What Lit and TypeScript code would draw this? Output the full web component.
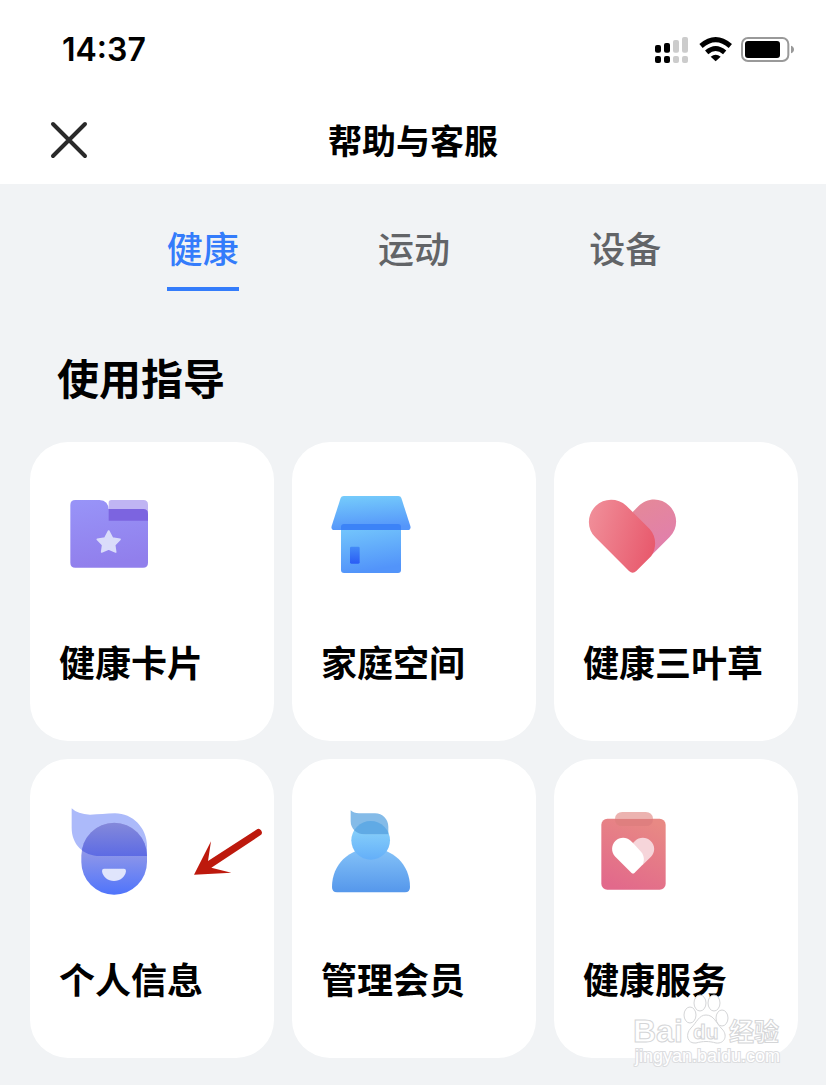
import { LitElement, html, css, svg } from "lit";
import { customElement, state } from "lit/decorators.js";

const folderIcon = html`<svg class="icon" viewBox="0 0 360 330" aria-hidden="true">
  <defs>
    <linearGradient id="folder" x1="0" y1="0" x2="0.2" y2="1">
      <stop offset="0" stop-color="#9894f8" /><stop offset="1" stop-color="#917fec" />
    </linearGradient>
  </defs>
  <path d="M176 68Q176 60 184 60H280Q294 60 294 74V110H176Z" fill="#c0b5f3" />
  <path d="M160 87H280Q294 87 294 101V140H160Z" fill="#7c64e0" />
  <path d="M76 60H148Q176 62 176 90V122H294V248Q294 263 279 263H76Q61 263 61 248V75Q61 60 76 60Z" fill="url(#folder)" />
  <path d="M176 153L187 174L210 178L194 195L197 216L176 207L155 216L158 195L142 178L165 174Z" fill="#dadcfa" stroke="#dadcfa" stroke-width="5" stroke-linejoin="round" />
</svg>`;

const houseIcon = html`<svg class="icon" viewBox="-9 0 360 330" aria-hidden="true">
  <defs>
    <linearGradient id="roof" x1="0" y1="0" x2="0.15" y2="1">
      <stop offset="0" stop-color="#76cdfb" /><stop offset="1" stop-color="#5596fa" />
    </linearGradient>
    <linearGradient id="wall" x1="0" y1="0" x2="0.2" y2="1">
      <stop offset="0" stop-color="#77cbfc" /><stop offset="1" stop-color="#5294fa" />
    </linearGradient>
    <linearGradient id="door" x1="0" y1="0" x2="0" y2="1">
      <stop offset="0" stop-color="#438bf7" /><stop offset="1" stop-color="#2a5cf5" />
    </linearGradient>
  </defs>
  <rect x="78" y="132" width="180" height="147" rx="9" fill="url(#wall)" />
  <path d="M86 48H250Q257 48 259 54L286 138Q289 150 277 150H59Q47 150 50 138L77 54Q79 48 86 48Z" fill="url(#roof)" />
  <path d="M78 150V141Q78 132 87 132H249Q258 132 258 141V150Z" fill="#3c83f7" />
  <rect x="105" y="200" width="29" height="51" rx="4" fill="url(#door)" />
</svg>`;

const heartIcon = html`<svg class="icon" viewBox="-3 0 360 330" aria-hidden="true">
  <defs>
    <linearGradient id="heart-front" x1="0" y1="0.3" x2="1" y2="0.6">
      <stop offset="0" stop-color="#f08d98" /><stop offset="1" stop-color="#e85a6d" />
    </linearGradient>
    <linearGradient id="heart-back" x1="0" y1="0" x2="0.4" y2="1">
      <stop offset="0" stop-color="#e58997" /><stop offset="1" stop-color="#e17fac" />
    </linearGradient>
  </defs>
  <path d="M173 96L190 79C214 53 257 51 283 77C310 104 310 145 284 171L230 225Z" fill="url(#heart-back)" />
  <path d="M173 96L154 77C128 53 87 53 62 78C35 105 35 146 61 172L162 273Q173 283 184 273L229 228C245 204 245 169 224 147Z" fill="url(#heart-front)" />
</svg>`;

const faceIcon = html`<svg class="icon" viewBox="0 6 360 330" aria-hidden="true">
  <defs>
    <linearGradient id="face" x1="0" y1="0" x2="0" y2="1">
      <stop offset="0.25" stop-color="#a0a0e4" /><stop offset="1" stop-color="#4f74fb" />
    </linearGradient>
    <linearGradient id="brow" x1="0" y1="0" x2="0" y2="1">
      <stop offset="0" stop-color="#8489da" /><stop offset="1" stop-color="#5d6be4" />
    </linearGradient>
    <clipPath id="hair">
      <path d="M65 40Q83 58 120 59C148 59 168 55 195 55C248 55 291 99 291 153V183H150C99 183 65 147 65 98Z" />
    </clipPath>
  </defs>
  <path d="M65 40Q83 58 120 59C148 59 168 55 195 55C248 55 291 99 291 153V183H150C99 183 65 147 65 98Z" fill="#acbafa" />
  <rect x="94" y="84" width="197" height="215" rx="98" fill="url(#face)" />
  <g clip-path="url(#hair)">
    <path d="M94 183A98 99 0 0 1 291 183Z" fill="url(#brow)" />
  </g>
  <path d="M162 221H222Q228 221 228 228C226 246 210 258 192 258C174 258 158 246 156 228Q156 221 162 221Z" fill="#e0e5fc" />
</svg>`;

const memberIcon = html`<svg class="icon" viewBox="-9 6 360 330" aria-hidden="true">
  <defs>
    <linearGradient id="body" x1="0" y1="0" x2="0" y2="1">
      <stop offset="0" stop-color="#85c3f8" /><stop offset="1" stop-color="#5597eb" />
    </linearGradient>
    <linearGradient id="head" x1="0" y1="0" x2="0" y2="1">
      <stop offset="0.3" stop-color="#83ccfa" /><stop offset="1" stop-color="#64aff9" />
    </linearGradient>
    <clipPath id="member-hair">
      <path d="M107 46Q117 56 135 55H180C203 55 220 73 220 95V118H149C124 118 107 101 107 79Z" />
    </clipPath>
  </defs>
  <path d="M51 276C51 208 103 160 168 160C233 160 285 208 285 276Q285 292 270 292H66Q51 292 51 276Z" fill="url(#body)" />
  <circle cx="167" cy="136" r="58" fill="url(#head)" />
  <path d="M107 46Q117 56 135 55H180C203 55 220 73 220 95V118H149C124 118 107 101 107 79Z" fill="#84bbe8" />
  <circle cx="167" cy="136" r="58" fill="#60aae5" clip-path="url(#member-hair)" />
</svg>`;

const clipboardIcon = html`<svg class="icon" viewBox="-3 6 360 330" aria-hidden="true">
  <defs>
    <linearGradient id="board" x1="0.7" y1="0" x2="0.3" y2="1">
      <stop offset="0" stop-color="#e88984" /><stop offset="1" stop-color="#e2698b" />
    </linearGradient>
  </defs>
  <rect x="79" y="71" width="193" height="213" rx="18" fill="url(#board)" />
  <path d="M120 71Q122 51 142 51H212Q232 51 234 71Z" fill="#ecb3b0" />
  <path d="M120 71H234Q234 93 212 93H142Q120 93 120 71Z" fill="#df7f7f" />
  <path d="M174 144L180 138C193 125 214 125 227 138C241 152 241 172 228 185L202 211Z" fill="#f6d5da" />
  <path d="M174 144L167 137C154 125 134 125 121 138C108 151 108 172 121 185L169 233Q174 238 179 233L202 210C209 198 208 181 198 170Z" fill="#fff" />
</svg>`;

const guides = [
  { label: "健康卡片", icon: folderIcon },
  { label: "家庭空间", icon: houseIcon },
  { label: "健康三叶草", icon: heartIcon },
  { label: "个人信息", icon: faceIcon, arrow: true },
  { label: "管理会员", icon: memberIcon },
  { label: "健康服务", icon: clipboardIcon },
];

const signalBars = [
  { x: 45, y: 75, h: 23, on: true },
  { x: 72, y: 69, h: 29, on: true },
  { x: 99, y: 60, h: 38, on: false },
  { x: 126, y: 51, h: 47, on: false },
];

@customElement("app-root")
export class AppRoot extends LitElement {
  @state() private tab = "健康";

  static styles = css`
    :host {
      display: block;
      min-height: 100vh;
      background: #f1f3f5;
      color: #000;
      font-family: "Noto Sans CJK SC", sans-serif;
      font-weight: 500;
    }
    * { box-sizing: border-box; }
    .top { background: #fff; }
    .status {
      display: flex;
      justify-content: space-between;
      align-items: center;
      height: 100px;
      padding: 0 16px 0 62px;
    }
    .time {
      font: 600 32px/40px Inter, sans-serif;
    }
    .signals { display: block; width: 170px; height: 60px; }
    .bar {
      display: grid;
      grid-template-columns: 1fr auto 1fr;
      align-items: center;
      height: 84px;
      padding: 0 48px 4px;
    }
    .close {
      width: 42px;
      height: 42px;
      padding: 0;
      border: 0;
      background: none;
    }
    .close svg { display: block; width: 42px; height: 42px; }
    .heading { margin: 0; font-size: 34px; line-height: 50px; font-weight: 700; }
    .tabs {
      display: grid;
      grid-template-columns: repeat(3, 1fr);
      justify-items: center;
      padding: 36px 95px 0 97px;
    }
    .tab {
      padding: 0 0 13px;
      border: 0;
      border-bottom: 4px solid transparent;
      background: none;
      color: #626467;
      font: inherit;
      font-size: 36px;
      line-height: 54px;
    }
    .tab.active { color: #347cfb; border-color: #347cfb; }
    .title {
      margin: 56px 57px 35px;
      font-size: 42px;
      line-height: 60px;
      font-weight: 700;
    }
    .cards {
      display: grid;
      grid-template-columns: repeat(3, 1fr);
      gap: 18px;
      margin: 0;
      padding: 0 28px 27px 30px;
      list-style: none;
    }
    .cell { position: relative; }
    .card {
      display: flex;
      flex-direction: column;
      gap: 46px;
      padding: 38px 20px 55px;
      border-radius: 38px;
      background: #fff;
      color: inherit;
      text-decoration: none;
    }
    .icon { display: block; width: 120px; height: 110px; }
    .label { padding-left: 9px; font-size: 36px; line-height: 50px; font-weight: 700; white-space: nowrap; }
    .arrow {
      position: absolute;
      top: 68px;
      right: 8px;
      width: 74px;
      height: 52px;
      pointer-events: none;
    }
    .watermark {
      position: absolute;
      right: 8px;
      bottom: -16px;
      width: 160px;
      height: 80px;
      pointer-events: none;
      font-family: "Liberation Sans", "Noto Sans CJK SC", sans-serif;
      font-weight: 400;
      overflow: visible;
    }
    .outline { fill: #fff; stroke: #d4d5d7; stroke-width: 1; }
    .brand { font-size: 32px; font-weight: 700; }
    .small { font-size: 21px; font-weight: 700; }
    .cjk { font-size: 25px; font-weight: 700; }
    .site { font-size: 18px; fill: #fff; stroke: #dcdddf; stroke-width: 2; paint-order: stroke; }
  `;

  private arrow() {
    return html`<svg class="arrow" viewBox="426 96 222 156" aria-hidden="true">
      <path d="M432 239L483 139L474 198L619 104A10 10 0 0 1 631 121L484 218L544 233Z" fill="#bd190d" />
    </svg>`;
  }

  private watermark() {
    return html`<svg class="watermark" viewBox="0 0 160 80" aria-hidden="true">
      <g class="outline">
        <ellipse cx="60" cy="21" rx="6" ry="8" />
        <ellipse cx="70" cy="9" rx="6" ry="8" />
        <ellipse cx="84" cy="9" rx="6" ry="8" />
        <ellipse cx="92" cy="24" rx="6" ry="8" />
        <path d="M76 21C69 21 67 28 61 34C55 40 57 50 66 49C73 47 79 47 86 49C95 50 98 41 92 35C86 29 84 21 76 21Z" />
        <text class="brand" x="3" y="48">Bai</text>
        <text class="small" x="63" y="45">du</text>
        <text class="cjk" x="99" y="47">经验</text>
      </g>
      <text class="site" x="5" y="68">jingyan.baidu.com</text>
    </svg>`;
  }

  render() {
    return html`
      <header class="top">
        <div class="status">
          <span class="time">14:37</span>
          <svg class="signals" viewBox="0 0 510 180" aria-hidden="true">
            ${signalBars.map((b) => svg`
              <rect x=${b.x} y=${b.y} width="18" height=${b.h} rx="6" fill=${b.on ? "#000" : "#ccc"} />
              <rect x=${b.x} y="108" width="18" height="21" rx="6" fill=${b.on ? "#000" : "#ccc"} />`)}
            <g fill="none" stroke="#000" stroke-width="15">
              <path d="M183 78Q227 40 271 78" />
              <path d="M200 97Q227 74 254 97" />
            </g>
            <path d="M212 110Q227 98 242 110L227 124Z" />
            <rect x="306" y="54" width="139" height="69" rx="18" fill="none" stroke="#999" stroke-width="6" />
            <rect x="315" y="63" width="105" height="51" rx="9" />
            <path d="M453 77Q462 80 462 88Q462 97 453 100Z" fill="#999" />
          </svg>
        </div>
        <div class="bar">
          <button class="close" aria-label="关闭">
            <svg viewBox="0 0 42 42" aria-hidden="true">
              <path d="M5 5L37 37M37 5L5 37" stroke="#2a2a2a" stroke-width="4" stroke-linecap="round" />
            </svg>
          </button>
          <h1 class="heading">帮助与客服</h1>
        </div>
      </header>
      <main>
        <nav class="tabs">
          ${["健康", "运动", "设备"].map((t) => html`
            <button class="tab ${t === this.tab ? "active" : ""}" @click=${() => (this.tab = t)}>${t}</button>`)}
        </nav>
        <h2 class="title">使用指导</h2>
        <ul class="cards">
          ${guides.map((g, i) => html`
            <li class="cell">
              <a class="card" href="#">${g.icon}<span class="label">${g.label}</span></a>
              ${g.arrow ? this.arrow() : ""}
              ${i === guides.length - 1 ? this.watermark() : ""}
            </li>`)}
        </ul>
      </main>
    `;
  }
}
